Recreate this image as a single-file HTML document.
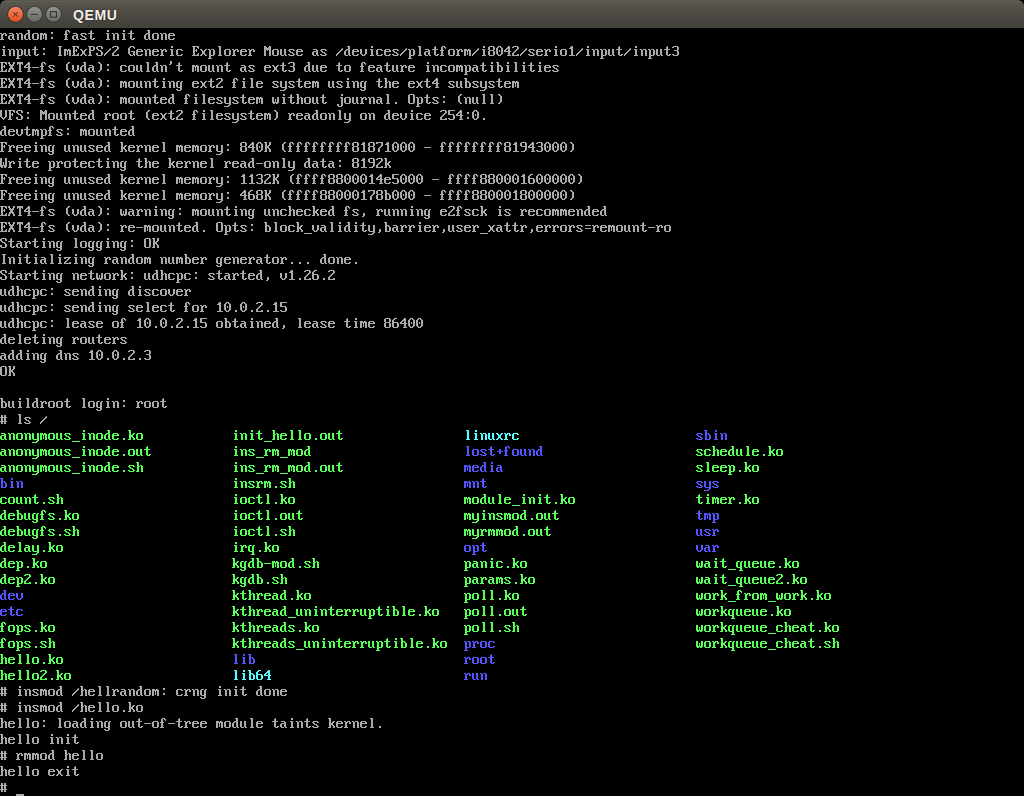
<!DOCTYPE html>
<html><head><meta charset="utf-8"><style>
html,body{margin:0;padding:0;background:#000;width:1024px;height:796px;overflow:hidden}
#win{position:absolute;left:0;top:0;width:1024px;height:796px;background:#000}
#tb{position:absolute;left:0;top:0;width:1024px;height:28px;border-radius:6px 6px 0 0;background:linear-gradient(#595750 0px,#595750 1px,#625f55 1px,#625f55 2px,#5a574f 2px,#413f3a 27px,#474540 27px,#474540 28px)}
#hl{position:absolute;left:1px;top:1px;width:1022px;height:7px;box-sizing:border-box;border-top:1px solid #625f55;border-left:1px solid rgba(98,95,85,.5);border-right:1px solid rgba(98,95,85,.5);border-radius:5px 5px 0 0}
#tbsvg{position:absolute;left:0;top:0}
#con{position:absolute;left:0;top:28px}
#txt{position:absolute;left:0;top:28px;margin:0;width:1024px;height:768px;overflow:hidden;font:13.333px/16px "Liberation Mono",monospace;color:transparent;white-space:pre}
#title{position:absolute;left:73px;top:7px;letter-spacing:0.6px;font:bold 14px "Liberation Sans",sans-serif;color:#f2eee6;text-shadow:0 0 2px rgba(0,0,0,.7)}
</style></head><body><div id="win">
<div id="tb">
<svg id="tbsvg" width="80" height="28" viewBox="0 0 80 28">
<defs>
<linearGradient id="og" x1="0" y1="0" x2="0" y2="1"><stop offset="0" stop-color="#f3876a"/><stop offset=".5" stop-color="#ed6b3e"/><stop offset="1" stop-color="#e0501a"/></linearGradient>
<linearGradient id="gg" x1="0" y1="0" x2="0" y2="1"><stop offset="0" stop-color="#93928d"/><stop offset="1" stop-color="#686763"/></linearGradient>
</defs>
<circle cx="15.5" cy="14.3" r="8.4" fill="#323533"/>
<circle cx="15.5" cy="14.3" r="7.5" fill="url(#og)"/>
<path d="M13.5 12.4L17.5 16.4M17.5 12.4L13.5 16.4" stroke="#2a2a2a" stroke-width="1" stroke-linecap="round"/>
<circle cx="34.5" cy="14.3" r="8.4" fill="#363532"/>
<circle cx="34.5" cy="14.3" r="7.5" fill="url(#gg)"/>
<rect x="31" y="13.9" width="7" height="1.2" fill="#383734"/><rect x="31" y="15.1" width="7" height="1" fill="#fff" fill-opacity=".08"/>
<circle cx="53.5" cy="14.3" r="8.4" fill="#363532"/>
<circle cx="53.5" cy="14.3" r="7.5" fill="url(#gg)"/>
<rect x="50.5" y="11.7" width="6" height="5.5" fill="none" stroke="#363532" stroke-width="1.1"/><rect x="50" y="18.3" width="7" height="1" fill="#fff" fill-opacity=".08"/>
</svg>
<div id="hl"></div><div id="title">QEMU</div></div>
<svg id="con" width="1024" height="768" viewBox="0 0 1024 768" shape-rendering="crispEdges"><defs><path id="c35" d="M1 3h2v1h-2zM4 3h2v1h-2zM1 4h2v1h-2zM4 4h2v1h-2zM0 5h7v1h-7zM1 6h2v1h-2zM4 6h2v1h-2zM1 7h2v1h-2zM4 7h2v1h-2zM1 8h2v1h-2zM4 8h2v1h-2zM0 9h7v1h-7zM1 10h2v1h-2zM4 10h2v1h-2zM1 11h2v1h-2zM4 11h2v1h-2z"/><path id="c39" d="M2 1h2v1h-2zM2 2h2v1h-2zM2 3h2v1h-2zM1 4h2v1h-2z"/><path id="c40" d="M4 2h2v1h-2zM3 3h2v1h-2zM2 4h2v1h-2zM2 5h2v1h-2zM2 6h2v1h-2zM2 7h2v1h-2zM2 8h2v1h-2zM2 9h2v1h-2zM3 10h2v1h-2zM4 11h2v1h-2z"/><path id="c41" d="M2 2h2v1h-2zM3 3h2v1h-2zM4 4h2v1h-2zM4 5h2v1h-2zM4 6h2v1h-2zM4 7h2v1h-2zM4 8h2v1h-2zM4 9h2v1h-2zM3 10h2v1h-2zM2 11h2v1h-2z"/><path id="c43" d="M3 5h2v1h-2zM3 6h2v1h-2zM1 7h6v1h-6zM3 8h2v1h-2zM3 9h2v1h-2z"/><path id="c44" d="M3 9h2v1h-2zM3 10h2v1h-2zM3 11h2v1h-2zM2 12h2v1h-2z"/><path id="c45" d="M0 7h7v1h-7z"/><path id="c46" d="M3 10h2v1h-2zM3 11h2v1h-2z"/><path id="c47" d="M6 4h1v1h-1zM5 5h2v1h-2zM4 6h2v1h-2zM3 7h2v1h-2zM2 8h2v1h-2zM1 9h2v1h-2zM0 10h2v1h-2zM0 11h1v1h-1z"/><path id="c48" d="M2 2h3v1h-3zM1 3h2v1h-2zM4 3h2v1h-2zM0 4h2v1h-2zM5 4h2v1h-2zM0 5h2v1h-2zM5 5h2v1h-2zM0 6h2v1h-2zM3 6h1v1h-1zM5 6h2v1h-2zM0 7h2v1h-2zM3 7h1v1h-1zM5 7h2v1h-2zM0 8h2v1h-2zM5 8h2v1h-2zM0 9h2v1h-2zM5 9h2v1h-2zM1 10h2v1h-2zM4 10h2v1h-2zM2 11h3v1h-3z"/><path id="c49" d="M3 2h2v1h-2zM2 3h3v1h-3zM1 4h4v1h-4zM3 5h2v1h-2zM3 6h2v1h-2zM3 7h2v1h-2zM3 8h2v1h-2zM3 9h2v1h-2zM3 10h2v1h-2zM1 11h6v1h-6z"/><path id="c50" d="M1 2h5v1h-5zM0 3h2v1h-2zM5 3h2v1h-2zM5 4h2v1h-2zM4 5h2v1h-2zM3 6h2v1h-2zM2 7h2v1h-2zM1 8h2v1h-2zM0 9h2v1h-2zM0 10h2v1h-2zM5 10h2v1h-2zM0 11h7v1h-7z"/><path id="c51" d="M1 2h5v1h-5zM0 3h2v1h-2zM5 3h2v1h-2zM5 4h2v1h-2zM5 5h2v1h-2zM2 6h4v1h-4zM5 7h2v1h-2zM5 8h2v1h-2zM5 9h2v1h-2zM0 10h2v1h-2zM5 10h2v1h-2zM1 11h5v1h-5z"/><path id="c52" d="M4 2h2v1h-2zM3 3h3v1h-3zM2 4h4v1h-4zM1 5h2v1h-2zM4 5h2v1h-2zM0 6h2v1h-2zM4 6h2v1h-2zM0 7h7v1h-7zM4 8h2v1h-2zM4 9h2v1h-2zM4 10h2v1h-2zM3 11h4v1h-4z"/><path id="c53" d="M0 2h7v1h-7zM0 3h2v1h-2zM0 4h2v1h-2zM0 5h2v1h-2zM0 6h6v1h-6zM5 7h2v1h-2zM5 8h2v1h-2zM5 9h2v1h-2zM0 10h2v1h-2zM5 10h2v1h-2zM1 11h5v1h-5z"/><path id="c54" d="M2 2h3v1h-3zM1 3h2v1h-2zM0 4h2v1h-2zM0 5h2v1h-2zM0 6h6v1h-6zM0 7h2v1h-2zM5 7h2v1h-2zM0 8h2v1h-2zM5 8h2v1h-2zM0 9h2v1h-2zM5 9h2v1h-2zM0 10h2v1h-2zM5 10h2v1h-2zM1 11h5v1h-5z"/><path id="c55" d="M0 2h7v1h-7zM0 3h2v1h-2zM5 3h2v1h-2zM5 4h2v1h-2zM5 5h2v1h-2zM4 6h2v1h-2zM3 7h2v1h-2zM2 8h2v1h-2zM2 9h2v1h-2zM2 10h2v1h-2zM2 11h2v1h-2z"/><path id="c56" d="M1 2h5v1h-5zM0 3h2v1h-2zM5 3h2v1h-2zM0 4h2v1h-2zM5 4h2v1h-2zM0 5h2v1h-2zM5 5h2v1h-2zM1 6h5v1h-5zM0 7h2v1h-2zM5 7h2v1h-2zM0 8h2v1h-2zM5 8h2v1h-2zM0 9h2v1h-2zM5 9h2v1h-2zM0 10h2v1h-2zM5 10h2v1h-2zM1 11h5v1h-5z"/><path id="c57" d="M1 2h5v1h-5zM0 3h2v1h-2zM5 3h2v1h-2zM0 4h2v1h-2zM5 4h2v1h-2zM0 5h2v1h-2zM5 5h2v1h-2zM1 6h6v1h-6zM5 7h2v1h-2zM5 8h2v1h-2zM5 9h2v1h-2zM4 10h2v1h-2zM1 11h4v1h-4z"/><path id="c58" d="M3 4h2v1h-2zM3 5h2v1h-2zM3 9h2v1h-2zM3 10h2v1h-2z"/><path id="c61" d="M1 5h6v1h-6zM1 8h6v1h-6z"/><path id="c69" d="M0 2h7v1h-7zM1 3h2v1h-2zM5 3h2v1h-2zM1 4h2v1h-2zM6 4h1v1h-1zM1 5h2v1h-2zM4 5h1v1h-1zM1 6h4v1h-4zM1 7h2v1h-2zM4 7h1v1h-1zM1 8h2v1h-2zM1 9h2v1h-2zM6 9h1v1h-1zM1 10h2v1h-2zM5 10h2v1h-2zM0 11h7v1h-7z"/><path id="c70" d="M0 2h7v1h-7zM1 3h2v1h-2zM5 3h2v1h-2zM1 4h2v1h-2zM6 4h1v1h-1zM1 5h2v1h-2zM4 5h1v1h-1zM1 6h4v1h-4zM1 7h2v1h-2zM4 7h1v1h-1zM1 8h2v1h-2zM1 9h2v1h-2zM1 10h2v1h-2zM0 11h4v1h-4z"/><path id="c71" d="M2 2h4v1h-4zM1 3h2v1h-2zM5 3h2v1h-2zM0 4h2v1h-2zM6 4h1v1h-1zM0 5h2v1h-2zM0 6h2v1h-2zM0 7h2v1h-2zM3 7h4v1h-4zM0 8h2v1h-2zM5 8h2v1h-2zM0 9h2v1h-2zM5 9h2v1h-2zM1 10h2v1h-2zM5 10h2v1h-2zM2 11h3v1h-3zM6 11h1v1h-1z"/><path id="c73" d="M2 2h4v1h-4zM3 3h2v1h-2zM3 4h2v1h-2zM3 5h2v1h-2zM3 6h2v1h-2zM3 7h2v1h-2zM3 8h2v1h-2zM3 9h2v1h-2zM3 10h2v1h-2zM2 11h4v1h-4z"/><path id="c75" d="M0 2h3v1h-3zM5 2h2v1h-2zM1 3h2v1h-2zM5 3h2v1h-2zM1 4h2v1h-2zM5 4h2v1h-2zM1 5h2v1h-2zM4 5h2v1h-2zM1 6h4v1h-4zM1 7h4v1h-4zM1 8h2v1h-2zM4 8h2v1h-2zM1 9h2v1h-2zM5 9h2v1h-2zM1 10h2v1h-2zM5 10h2v1h-2zM0 11h3v1h-3zM5 11h2v1h-2z"/><path id="c77" d="M0 2h2v1h-2zM5 2h2v1h-2zM0 3h3v1h-3zM4 3h3v1h-3zM0 4h7v1h-7zM0 5h7v1h-7zM0 6h2v1h-2zM3 6h1v1h-1zM5 6h2v1h-2zM0 7h2v1h-2zM5 7h2v1h-2zM0 8h2v1h-2zM5 8h2v1h-2zM0 9h2v1h-2zM5 9h2v1h-2zM0 10h2v1h-2zM5 10h2v1h-2zM0 11h2v1h-2zM5 11h2v1h-2z"/><path id="c79" d="M1 2h5v1h-5zM0 3h2v1h-2zM5 3h2v1h-2zM0 4h2v1h-2zM5 4h2v1h-2zM0 5h2v1h-2zM5 5h2v1h-2zM0 6h2v1h-2zM5 6h2v1h-2zM0 7h2v1h-2zM5 7h2v1h-2zM0 8h2v1h-2zM5 8h2v1h-2zM0 9h2v1h-2zM5 9h2v1h-2zM0 10h2v1h-2zM5 10h2v1h-2zM1 11h5v1h-5z"/><path id="c80" d="M0 2h6v1h-6zM1 3h2v1h-2zM5 3h2v1h-2zM1 4h2v1h-2zM5 4h2v1h-2zM1 5h2v1h-2zM5 5h2v1h-2zM1 6h5v1h-5zM1 7h2v1h-2zM1 8h2v1h-2zM1 9h2v1h-2zM1 10h2v1h-2zM0 11h4v1h-4z"/><path id="c83" d="M1 2h5v1h-5zM0 3h2v1h-2zM5 3h2v1h-2zM0 4h2v1h-2zM5 4h2v1h-2zM1 5h2v1h-2zM2 6h3v1h-3zM4 7h2v1h-2zM5 8h2v1h-2zM0 9h2v1h-2zM5 9h2v1h-2zM0 10h2v1h-2zM5 10h2v1h-2zM1 11h5v1h-5z"/><path id="c84" d="M1 2h6v1h-6zM1 3h6v1h-6zM1 4h1v1h-1zM3 4h2v1h-2zM6 4h1v1h-1zM3 5h2v1h-2zM3 6h2v1h-2zM3 7h2v1h-2zM3 8h2v1h-2zM3 9h2v1h-2zM3 10h2v1h-2zM2 11h4v1h-4z"/><path id="c86" d="M0 2h2v1h-2zM5 2h2v1h-2zM0 3h2v1h-2zM5 3h2v1h-2zM0 4h2v1h-2zM5 4h2v1h-2zM0 5h2v1h-2zM5 5h2v1h-2zM0 6h2v1h-2zM5 6h2v1h-2zM0 7h2v1h-2zM5 7h2v1h-2zM0 8h2v1h-2zM5 8h2v1h-2zM1 9h2v1h-2zM4 9h2v1h-2zM2 10h3v1h-3zM3 11h1v1h-1z"/><path id="c87" d="M0 2h2v1h-2zM5 2h2v1h-2zM0 3h2v1h-2zM5 3h2v1h-2zM0 4h2v1h-2zM5 4h2v1h-2zM0 5h2v1h-2zM5 5h2v1h-2zM0 6h2v1h-2zM3 6h1v1h-1zM5 6h2v1h-2zM0 7h2v1h-2zM3 7h1v1h-1zM5 7h2v1h-2zM0 8h2v1h-2zM3 8h1v1h-1zM5 8h2v1h-2zM0 9h7v1h-7zM0 10h3v1h-3zM4 10h3v1h-3zM1 11h2v1h-2zM4 11h2v1h-2z"/><path id="c88" d="M0 2h2v1h-2zM5 2h2v1h-2zM0 3h2v1h-2zM5 3h2v1h-2zM1 4h2v1h-2zM4 4h2v1h-2zM1 5h5v1h-5zM2 6h3v1h-3zM2 7h3v1h-3zM1 8h5v1h-5zM1 9h2v1h-2zM4 9h2v1h-2zM0 10h2v1h-2zM5 10h2v1h-2zM0 11h2v1h-2zM5 11h2v1h-2z"/><path id="c95" d="M0 13h8v1h-8z"/><path id="c97" d="M1 5h4v1h-4zM4 6h2v1h-2zM1 7h5v1h-5zM0 8h2v1h-2zM4 8h2v1h-2zM0 9h2v1h-2zM4 9h2v1h-2zM0 10h2v1h-2zM4 10h2v1h-2zM1 11h3v1h-3zM5 11h2v1h-2z"/><path id="c98" d="M0 2h3v1h-3zM1 3h2v1h-2zM1 4h2v1h-2zM1 5h4v1h-4zM1 6h2v1h-2zM4 6h2v1h-2zM1 7h2v1h-2zM5 7h2v1h-2zM1 8h2v1h-2zM5 8h2v1h-2zM1 9h2v1h-2zM5 9h2v1h-2zM1 10h2v1h-2zM5 10h2v1h-2zM1 11h5v1h-5z"/><path id="c99" d="M1 5h5v1h-5zM0 6h2v1h-2zM5 6h2v1h-2zM0 7h2v1h-2zM0 8h2v1h-2zM0 9h2v1h-2zM0 10h2v1h-2zM5 10h2v1h-2zM1 11h5v1h-5z"/><path id="c100" d="M3 2h3v1h-3zM4 3h2v1h-2zM4 4h2v1h-2zM2 5h4v1h-4zM1 6h2v1h-2zM4 6h2v1h-2zM0 7h2v1h-2zM4 7h2v1h-2zM0 8h2v1h-2zM4 8h2v1h-2zM0 9h2v1h-2zM4 9h2v1h-2zM0 10h2v1h-2zM4 10h2v1h-2zM1 11h3v1h-3zM5 11h2v1h-2z"/><path id="c101" d="M1 5h5v1h-5zM0 6h2v1h-2zM5 6h2v1h-2zM0 7h7v1h-7zM0 8h2v1h-2zM0 9h2v1h-2zM0 10h2v1h-2zM5 10h2v1h-2zM1 11h5v1h-5z"/><path id="c102" d="M2 2h3v1h-3zM1 3h2v1h-2zM4 3h2v1h-2zM1 4h2v1h-2zM5 4h1v1h-1zM1 5h2v1h-2zM0 6h4v1h-4zM1 7h2v1h-2zM1 8h2v1h-2zM1 9h2v1h-2zM1 10h2v1h-2zM0 11h4v1h-4z"/><path id="c103" d="M1 5h3v1h-3zM5 5h2v1h-2zM0 6h2v1h-2zM4 6h2v1h-2zM0 7h2v1h-2zM4 7h2v1h-2zM0 8h2v1h-2zM4 8h2v1h-2zM0 9h2v1h-2zM4 9h2v1h-2zM0 10h2v1h-2zM4 10h2v1h-2zM1 11h5v1h-5zM4 12h2v1h-2zM0 13h2v1h-2zM4 13h2v1h-2zM1 14h4v1h-4z"/><path id="c104" d="M0 2h3v1h-3zM1 3h2v1h-2zM1 4h2v1h-2zM1 5h2v1h-2zM4 5h2v1h-2zM1 6h3v1h-3zM5 6h2v1h-2zM1 7h2v1h-2zM5 7h2v1h-2zM1 8h2v1h-2zM5 8h2v1h-2zM1 9h2v1h-2zM5 9h2v1h-2zM1 10h2v1h-2zM5 10h2v1h-2zM0 11h3v1h-3zM5 11h2v1h-2z"/><path id="c105" d="M3 2h2v1h-2zM3 3h2v1h-2zM2 5h3v1h-3zM3 6h2v1h-2zM3 7h2v1h-2zM3 8h2v1h-2zM3 9h2v1h-2zM3 10h2v1h-2zM2 11h4v1h-4z"/><path id="c106" d="M5 2h2v1h-2zM5 3h2v1h-2zM4 5h3v1h-3zM5 6h2v1h-2zM5 7h2v1h-2zM5 8h2v1h-2zM5 9h2v1h-2zM5 10h2v1h-2zM5 11h2v1h-2zM1 12h2v1h-2zM5 12h2v1h-2zM1 13h2v1h-2zM5 13h2v1h-2zM2 14h4v1h-4z"/><path id="c107" d="M0 2h3v1h-3zM1 3h2v1h-2zM1 4h2v1h-2zM1 5h2v1h-2zM5 5h2v1h-2zM1 6h2v1h-2zM4 6h2v1h-2zM1 7h4v1h-4zM1 8h4v1h-4zM1 9h2v1h-2zM4 9h2v1h-2zM1 10h2v1h-2zM5 10h2v1h-2zM0 11h3v1h-3zM5 11h2v1h-2z"/><path id="c108" d="M2 2h3v1h-3zM3 3h2v1h-2zM3 4h2v1h-2zM3 5h2v1h-2zM3 6h2v1h-2zM3 7h2v1h-2zM3 8h2v1h-2zM3 9h2v1h-2zM3 10h2v1h-2zM2 11h4v1h-4z"/><path id="c109" d="M0 5h3v1h-3zM4 5h2v1h-2zM0 6h7v1h-7zM0 7h2v1h-2zM3 7h1v1h-1zM5 7h2v1h-2zM0 8h2v1h-2zM3 8h1v1h-1zM5 8h2v1h-2zM0 9h2v1h-2zM3 9h1v1h-1zM5 9h2v1h-2zM0 10h2v1h-2zM3 10h1v1h-1zM5 10h2v1h-2zM0 11h2v1h-2zM5 11h2v1h-2z"/><path id="c110" d="M0 5h2v1h-2zM3 5h3v1h-3zM1 6h2v1h-2zM5 6h2v1h-2zM1 7h2v1h-2zM5 7h2v1h-2zM1 8h2v1h-2zM5 8h2v1h-2zM1 9h2v1h-2zM5 9h2v1h-2zM1 10h2v1h-2zM5 10h2v1h-2zM1 11h2v1h-2zM5 11h2v1h-2z"/><path id="c111" d="M1 5h5v1h-5zM0 6h2v1h-2zM5 6h2v1h-2zM0 7h2v1h-2zM5 7h2v1h-2zM0 8h2v1h-2zM5 8h2v1h-2zM0 9h2v1h-2zM5 9h2v1h-2zM0 10h2v1h-2zM5 10h2v1h-2zM1 11h5v1h-5z"/><path id="c112" d="M0 5h2v1h-2zM3 5h3v1h-3zM1 6h2v1h-2zM5 6h2v1h-2zM1 7h2v1h-2zM5 7h2v1h-2zM1 8h2v1h-2zM5 8h2v1h-2zM1 9h2v1h-2zM5 9h2v1h-2zM1 10h2v1h-2zM5 10h2v1h-2zM1 11h5v1h-5zM1 12h2v1h-2zM1 13h2v1h-2zM0 14h4v1h-4z"/><path id="c113" d="M1 5h3v1h-3zM5 5h2v1h-2zM0 6h2v1h-2zM4 6h2v1h-2zM0 7h2v1h-2zM4 7h2v1h-2zM0 8h2v1h-2zM4 8h2v1h-2zM0 9h2v1h-2zM4 9h2v1h-2zM0 10h2v1h-2zM4 10h2v1h-2zM1 11h5v1h-5zM4 12h2v1h-2zM4 13h2v1h-2zM3 14h4v1h-4z"/><path id="c114" d="M0 5h2v1h-2zM3 5h3v1h-3zM1 6h3v1h-3zM5 6h2v1h-2zM1 7h2v1h-2zM5 7h2v1h-2zM1 8h2v1h-2zM1 9h2v1h-2zM1 10h2v1h-2zM0 11h4v1h-4z"/><path id="c115" d="M1 5h5v1h-5zM0 6h2v1h-2zM5 6h2v1h-2zM1 7h2v1h-2zM2 8h3v1h-3zM4 9h2v1h-2zM0 10h2v1h-2zM5 10h2v1h-2zM1 11h5v1h-5z"/><path id="c116" d="M3 2h1v1h-1zM2 3h2v1h-2zM2 4h2v1h-2zM0 5h6v1h-6zM2 6h2v1h-2zM2 7h2v1h-2zM2 8h2v1h-2zM2 9h2v1h-2zM2 10h2v1h-2zM5 10h2v1h-2zM3 11h3v1h-3z"/><path id="c117" d="M0 5h2v1h-2zM4 5h2v1h-2zM0 6h2v1h-2zM4 6h2v1h-2zM0 7h2v1h-2zM4 7h2v1h-2zM0 8h2v1h-2zM4 8h2v1h-2zM0 9h2v1h-2zM4 9h2v1h-2zM0 10h2v1h-2zM4 10h2v1h-2zM1 11h3v1h-3zM5 11h2v1h-2z"/><path id="c118" d="M0 5h2v1h-2zM5 5h2v1h-2zM0 6h2v1h-2zM5 6h2v1h-2zM0 7h2v1h-2zM5 7h2v1h-2zM0 8h2v1h-2zM5 8h2v1h-2zM0 9h2v1h-2zM5 9h2v1h-2zM1 10h2v1h-2zM4 10h2v1h-2zM2 11h3v1h-3z"/><path id="c119" d="M0 5h2v1h-2zM5 5h2v1h-2zM0 6h2v1h-2zM5 6h2v1h-2zM0 7h2v1h-2zM3 7h1v1h-1zM5 7h2v1h-2zM0 8h2v1h-2zM3 8h1v1h-1zM5 8h2v1h-2zM0 9h2v1h-2zM3 9h1v1h-1zM5 9h2v1h-2zM0 10h7v1h-7zM1 11h2v1h-2zM4 11h2v1h-2z"/><path id="c120" d="M0 5h2v1h-2zM5 5h2v1h-2zM1 6h2v1h-2zM4 6h2v1h-2zM2 7h3v1h-3zM2 8h3v1h-3zM2 9h3v1h-3zM1 10h2v1h-2zM4 10h2v1h-2zM0 11h2v1h-2zM5 11h2v1h-2z"/><path id="c121" d="M0 5h2v1h-2zM5 5h2v1h-2zM0 6h2v1h-2zM5 6h2v1h-2zM0 7h2v1h-2zM5 7h2v1h-2zM0 8h2v1h-2zM5 8h2v1h-2zM0 9h2v1h-2zM5 9h2v1h-2zM0 10h2v1h-2zM5 10h2v1h-2zM1 11h6v1h-6zM5 12h2v1h-2zM4 13h2v1h-2zM0 14h5v1h-5z"/><path id="c122" d="M0 5h7v1h-7zM0 6h2v1h-2zM4 6h2v1h-2zM3 7h2v1h-2zM2 8h2v1h-2zM1 9h2v1h-2zM0 10h2v1h-2zM5 10h2v1h-2zM0 11h7v1h-7z"/></defs><g fill="#aaaaaa"><use href="#c114" x="0" y="0"/><use href="#c97" x="8" y="0"/><use href="#c110" x="16" y="0"/><use href="#c100" x="24" y="0"/><use href="#c111" x="32" y="0"/><use href="#c109" x="40" y="0"/><use href="#c58" x="48" y="0"/><use href="#c102" x="64" y="0"/><use href="#c97" x="72" y="0"/><use href="#c115" x="80" y="0"/><use href="#c116" x="88" y="0"/><use href="#c105" x="104" y="0"/><use href="#c110" x="112" y="0"/><use href="#c105" x="120" y="0"/><use href="#c116" x="128" y="0"/><use href="#c100" x="144" y="0"/><use href="#c111" x="152" y="0"/><use href="#c110" x="160" y="0"/><use href="#c101" x="168" y="0"/><use href="#c105" x="0" y="16"/><use href="#c110" x="8" y="16"/><use href="#c112" x="16" y="16"/><use href="#c117" x="24" y="16"/><use href="#c116" x="32" y="16"/><use href="#c58" x="40" y="16"/><use href="#c73" x="56" y="16"/><use href="#c109" x="64" y="16"/><use href="#c69" x="72" y="16"/><use href="#c120" x="80" y="16"/><use href="#c80" x="88" y="16"/><use href="#c83" x="96" y="16"/><use href="#c47" x="104" y="16"/><use href="#c50" x="112" y="16"/><use href="#c71" x="128" y="16"/><use href="#c101" x="136" y="16"/><use href="#c110" x="144" y="16"/><use href="#c101" x="152" y="16"/><use href="#c114" x="160" y="16"/><use href="#c105" x="168" y="16"/><use href="#c99" x="176" y="16"/><use href="#c69" x="192" y="16"/><use href="#c120" x="200" y="16"/><use href="#c112" x="208" y="16"/><use href="#c108" x="216" y="16"/><use href="#c111" x="224" y="16"/><use href="#c114" x="232" y="16"/><use href="#c101" x="240" y="16"/><use href="#c114" x="248" y="16"/><use href="#c77" x="264" y="16"/><use href="#c111" x="272" y="16"/><use href="#c117" x="280" y="16"/><use href="#c115" x="288" y="16"/><use href="#c101" x="296" y="16"/><use href="#c97" x="312" y="16"/><use href="#c115" x="320" y="16"/><use href="#c47" x="336" y="16"/><use href="#c100" x="344" y="16"/><use href="#c101" x="352" y="16"/><use href="#c118" x="360" y="16"/><use href="#c105" x="368" y="16"/><use href="#c99" x="376" y="16"/><use href="#c101" x="384" y="16"/><use href="#c115" x="392" y="16"/><use href="#c47" x="400" y="16"/><use href="#c112" x="408" y="16"/><use href="#c108" x="416" y="16"/><use href="#c97" x="424" y="16"/><use href="#c116" x="432" y="16"/><use href="#c102" x="440" y="16"/><use href="#c111" x="448" y="16"/><use href="#c114" x="456" y="16"/><use href="#c109" x="464" y="16"/><use href="#c47" x="472" y="16"/><use href="#c105" x="480" y="16"/><use href="#c56" x="488" y="16"/><use href="#c48" x="496" y="16"/><use href="#c52" x="504" y="16"/><use href="#c50" x="512" y="16"/><use href="#c47" x="520" y="16"/><use href="#c115" x="528" y="16"/><use href="#c101" x="536" y="16"/><use href="#c114" x="544" y="16"/><use href="#c105" x="552" y="16"/><use href="#c111" x="560" y="16"/><use href="#c49" x="568" y="16"/><use href="#c47" x="576" y="16"/><use href="#c105" x="584" y="16"/><use href="#c110" x="592" y="16"/><use href="#c112" x="600" y="16"/><use href="#c117" x="608" y="16"/><use href="#c116" x="616" y="16"/><use href="#c47" x="624" y="16"/><use href="#c105" x="632" y="16"/><use href="#c110" x="640" y="16"/><use href="#c112" x="648" y="16"/><use href="#c117" x="656" y="16"/><use href="#c116" x="664" y="16"/><use href="#c51" x="672" y="16"/><use href="#c69" x="0" y="32"/><use href="#c88" x="8" y="32"/><use href="#c84" x="16" y="32"/><use href="#c52" x="24" y="32"/><use href="#c45" x="32" y="32"/><use href="#c102" x="40" y="32"/><use href="#c115" x="48" y="32"/><use href="#c40" x="64" y="32"/><use href="#c118" x="72" y="32"/><use href="#c100" x="80" y="32"/><use href="#c97" x="88" y="32"/><use href="#c41" x="96" y="32"/><use href="#c58" x="104" y="32"/><use href="#c99" x="120" y="32"/><use href="#c111" x="128" y="32"/><use href="#c117" x="136" y="32"/><use href="#c108" x="144" y="32"/><use href="#c100" x="152" y="32"/><use href="#c110" x="160" y="32"/><use href="#c39" x="168" y="32"/><use href="#c116" x="176" y="32"/><use href="#c109" x="192" y="32"/><use href="#c111" x="200" y="32"/><use href="#c117" x="208" y="32"/><use href="#c110" x="216" y="32"/><use href="#c116" x="224" y="32"/><use href="#c97" x="240" y="32"/><use href="#c115" x="248" y="32"/><use href="#c101" x="264" y="32"/><use href="#c120" x="272" y="32"/><use href="#c116" x="280" y="32"/><use href="#c51" x="288" y="32"/><use href="#c100" x="304" y="32"/><use href="#c117" x="312" y="32"/><use href="#c101" x="320" y="32"/><use href="#c116" x="336" y="32"/><use href="#c111" x="344" y="32"/><use href="#c102" x="360" y="32"/><use href="#c101" x="368" y="32"/><use href="#c97" x="376" y="32"/><use href="#c116" x="384" y="32"/><use href="#c117" x="392" y="32"/><use href="#c114" x="400" y="32"/><use href="#c101" x="408" y="32"/><use href="#c105" x="424" y="32"/><use href="#c110" x="432" y="32"/><use href="#c99" x="440" y="32"/><use href="#c111" x="448" y="32"/><use href="#c109" x="456" y="32"/><use href="#c112" x="464" y="32"/><use href="#c97" x="472" y="32"/><use href="#c116" x="480" y="32"/><use href="#c105" x="488" y="32"/><use href="#c98" x="496" y="32"/><use href="#c105" x="504" y="32"/><use href="#c108" x="512" y="32"/><use href="#c105" x="520" y="32"/><use href="#c116" x="528" y="32"/><use href="#c105" x="536" y="32"/><use href="#c101" x="544" y="32"/><use href="#c115" x="552" y="32"/><use href="#c69" x="0" y="48"/><use href="#c88" x="8" y="48"/><use href="#c84" x="16" y="48"/><use href="#c52" x="24" y="48"/><use href="#c45" x="32" y="48"/><use href="#c102" x="40" y="48"/><use href="#c115" x="48" y="48"/><use href="#c40" x="64" y="48"/><use href="#c118" x="72" y="48"/><use href="#c100" x="80" y="48"/><use href="#c97" x="88" y="48"/><use href="#c41" x="96" y="48"/><use href="#c58" x="104" y="48"/><use href="#c109" x="120" y="48"/><use href="#c111" x="128" y="48"/><use href="#c117" x="136" y="48"/><use href="#c110" x="144" y="48"/><use href="#c116" x="152" y="48"/><use href="#c105" x="160" y="48"/><use href="#c110" x="168" y="48"/><use href="#c103" x="176" y="48"/><use href="#c101" x="192" y="48"/><use href="#c120" x="200" y="48"/><use href="#c116" x="208" y="48"/><use href="#c50" x="216" y="48"/><use href="#c102" x="232" y="48"/><use href="#c105" x="240" y="48"/><use href="#c108" x="248" y="48"/><use href="#c101" x="256" y="48"/><use href="#c115" x="272" y="48"/><use href="#c121" x="280" y="48"/><use href="#c115" x="288" y="48"/><use href="#c116" x="296" y="48"/><use href="#c101" x="304" y="48"/><use href="#c109" x="312" y="48"/><use href="#c117" x="328" y="48"/><use href="#c115" x="336" y="48"/><use href="#c105" x="344" y="48"/><use href="#c110" x="352" y="48"/><use href="#c103" x="360" y="48"/><use href="#c116" x="376" y="48"/><use href="#c104" x="384" y="48"/><use href="#c101" x="392" y="48"/><use href="#c101" x="408" y="48"/><use href="#c120" x="416" y="48"/><use href="#c116" x="424" y="48"/><use href="#c52" x="432" y="48"/><use href="#c115" x="448" y="48"/><use href="#c117" x="456" y="48"/><use href="#c98" x="464" y="48"/><use href="#c115" x="472" y="48"/><use href="#c121" x="480" y="48"/><use href="#c115" x="488" y="48"/><use href="#c116" x="496" y="48"/><use href="#c101" x="504" y="48"/><use href="#c109" x="512" y="48"/><use href="#c69" x="0" y="64"/><use href="#c88" x="8" y="64"/><use href="#c84" x="16" y="64"/><use href="#c52" x="24" y="64"/><use href="#c45" x="32" y="64"/><use href="#c102" x="40" y="64"/><use href="#c115" x="48" y="64"/><use href="#c40" x="64" y="64"/><use href="#c118" x="72" y="64"/><use href="#c100" x="80" y="64"/><use href="#c97" x="88" y="64"/><use href="#c41" x="96" y="64"/><use href="#c58" x="104" y="64"/><use href="#c109" x="120" y="64"/><use href="#c111" x="128" y="64"/><use href="#c117" x="136" y="64"/><use href="#c110" x="144" y="64"/><use href="#c116" x="152" y="64"/><use href="#c101" x="160" y="64"/><use href="#c100" x="168" y="64"/><use href="#c102" x="184" y="64"/><use href="#c105" x="192" y="64"/><use href="#c108" x="200" y="64"/><use href="#c101" x="208" y="64"/><use href="#c115" x="216" y="64"/><use href="#c121" x="224" y="64"/><use href="#c115" x="232" y="64"/><use href="#c116" x="240" y="64"/><use href="#c101" x="248" y="64"/><use href="#c109" x="256" y="64"/><use href="#c119" x="272" y="64"/><use href="#c105" x="280" y="64"/><use href="#c116" x="288" y="64"/><use href="#c104" x="296" y="64"/><use href="#c111" x="304" y="64"/><use href="#c117" x="312" y="64"/><use href="#c116" x="320" y="64"/><use href="#c106" x="336" y="64"/><use href="#c111" x="344" y="64"/><use href="#c117" x="352" y="64"/><use href="#c114" x="360" y="64"/><use href="#c110" x="368" y="64"/><use href="#c97" x="376" y="64"/><use href="#c108" x="384" y="64"/><use href="#c46" x="392" y="64"/><use href="#c79" x="408" y="64"/><use href="#c112" x="416" y="64"/><use href="#c116" x="424" y="64"/><use href="#c115" x="432" y="64"/><use href="#c58" x="440" y="64"/><use href="#c40" x="456" y="64"/><use href="#c110" x="464" y="64"/><use href="#c117" x="472" y="64"/><use href="#c108" x="480" y="64"/><use href="#c108" x="488" y="64"/><use href="#c41" x="496" y="64"/><use href="#c86" x="0" y="80"/><use href="#c70" x="8" y="80"/><use href="#c83" x="16" y="80"/><use href="#c58" x="24" y="80"/><use href="#c77" x="40" y="80"/><use href="#c111" x="48" y="80"/><use href="#c117" x="56" y="80"/><use href="#c110" x="64" y="80"/><use href="#c116" x="72" y="80"/><use href="#c101" x="80" y="80"/><use href="#c100" x="88" y="80"/><use href="#c114" x="104" y="80"/><use href="#c111" x="112" y="80"/><use href="#c111" x="120" y="80"/><use href="#c116" x="128" y="80"/><use href="#c40" x="144" y="80"/><use href="#c101" x="152" y="80"/><use href="#c120" x="160" y="80"/><use href="#c116" x="168" y="80"/><use href="#c50" x="176" y="80"/><use href="#c102" x="192" y="80"/><use href="#c105" x="200" y="80"/><use href="#c108" x="208" y="80"/><use href="#c101" x="216" y="80"/><use href="#c115" x="224" y="80"/><use href="#c121" x="232" y="80"/><use href="#c115" x="240" y="80"/><use href="#c116" x="248" y="80"/><use href="#c101" x="256" y="80"/><use href="#c109" x="264" y="80"/><use href="#c41" x="272" y="80"/><use href="#c114" x="288" y="80"/><use href="#c101" x="296" y="80"/><use href="#c97" x="304" y="80"/><use href="#c100" x="312" y="80"/><use href="#c111" x="320" y="80"/><use href="#c110" x="328" y="80"/><use href="#c108" x="336" y="80"/><use href="#c121" x="344" y="80"/><use href="#c111" x="360" y="80"/><use href="#c110" x="368" y="80"/><use href="#c100" x="384" y="80"/><use href="#c101" x="392" y="80"/><use href="#c118" x="400" y="80"/><use href="#c105" x="408" y="80"/><use href="#c99" x="416" y="80"/><use href="#c101" x="424" y="80"/><use href="#c50" x="440" y="80"/><use href="#c53" x="448" y="80"/><use href="#c52" x="456" y="80"/><use href="#c58" x="464" y="80"/><use href="#c48" x="472" y="80"/><use href="#c46" x="480" y="80"/><use href="#c100" x="0" y="96"/><use href="#c101" x="8" y="96"/><use href="#c118" x="16" y="96"/><use href="#c116" x="24" y="96"/><use href="#c109" x="32" y="96"/><use href="#c112" x="40" y="96"/><use href="#c102" x="48" y="96"/><use href="#c115" x="56" y="96"/><use href="#c58" x="64" y="96"/><use href="#c109" x="80" y="96"/><use href="#c111" x="88" y="96"/><use href="#c117" x="96" y="96"/><use href="#c110" x="104" y="96"/><use href="#c116" x="112" y="96"/><use href="#c101" x="120" y="96"/><use href="#c100" x="128" y="96"/><use href="#c70" x="0" y="112"/><use href="#c114" x="8" y="112"/><use href="#c101" x="16" y="112"/><use href="#c101" x="24" y="112"/><use href="#c105" x="32" y="112"/><use href="#c110" x="40" y="112"/><use href="#c103" x="48" y="112"/><use href="#c117" x="64" y="112"/><use href="#c110" x="72" y="112"/><use href="#c117" x="80" y="112"/><use href="#c115" x="88" y="112"/><use href="#c101" x="96" y="112"/><use href="#c100" x="104" y="112"/><use href="#c107" x="120" y="112"/><use href="#c101" x="128" y="112"/><use href="#c114" x="136" y="112"/><use href="#c110" x="144" y="112"/><use href="#c101" x="152" y="112"/><use href="#c108" x="160" y="112"/><use href="#c109" x="176" y="112"/><use href="#c101" x="184" y="112"/><use href="#c109" x="192" y="112"/><use href="#c111" x="200" y="112"/><use href="#c114" x="208" y="112"/><use href="#c121" x="216" y="112"/><use href="#c58" x="224" y="112"/><use href="#c56" x="240" y="112"/><use href="#c52" x="248" y="112"/><use href="#c48" x="256" y="112"/><use href="#c75" x="264" y="112"/><use href="#c40" x="280" y="112"/><use href="#c102" x="288" y="112"/><use href="#c102" x="296" y="112"/><use href="#c102" x="304" y="112"/><use href="#c102" x="312" y="112"/><use href="#c102" x="320" y="112"/><use href="#c102" x="328" y="112"/><use href="#c102" x="336" y="112"/><use href="#c102" x="344" y="112"/><use href="#c56" x="352" y="112"/><use href="#c49" x="360" y="112"/><use href="#c56" x="368" y="112"/><use href="#c55" x="376" y="112"/><use href="#c49" x="384" y="112"/><use href="#c48" x="392" y="112"/><use href="#c48" x="400" y="112"/><use href="#c48" x="408" y="112"/><use href="#c45" x="424" y="112"/><use href="#c102" x="440" y="112"/><use href="#c102" x="448" y="112"/><use href="#c102" x="456" y="112"/><use href="#c102" x="464" y="112"/><use href="#c102" x="472" y="112"/><use href="#c102" x="480" y="112"/><use href="#c102" x="488" y="112"/><use href="#c102" x="496" y="112"/><use href="#c56" x="504" y="112"/><use href="#c49" x="512" y="112"/><use href="#c57" x="520" y="112"/><use href="#c52" x="528" y="112"/><use href="#c51" x="536" y="112"/><use href="#c48" x="544" y="112"/><use href="#c48" x="552" y="112"/><use href="#c48" x="560" y="112"/><use href="#c41" x="568" y="112"/><use href="#c87" x="0" y="128"/><use href="#c114" x="8" y="128"/><use href="#c105" x="16" y="128"/><use href="#c116" x="24" y="128"/><use href="#c101" x="32" y="128"/><use href="#c112" x="48" y="128"/><use href="#c114" x="56" y="128"/><use href="#c111" x="64" y="128"/><use href="#c116" x="72" y="128"/><use href="#c101" x="80" y="128"/><use href="#c99" x="88" y="128"/><use href="#c116" x="96" y="128"/><use href="#c105" x="104" y="128"/><use href="#c110" x="112" y="128"/><use href="#c103" x="120" y="128"/><use href="#c116" x="136" y="128"/><use href="#c104" x="144" y="128"/><use href="#c101" x="152" y="128"/><use href="#c107" x="168" y="128"/><use href="#c101" x="176" y="128"/><use href="#c114" x="184" y="128"/><use href="#c110" x="192" y="128"/><use href="#c101" x="200" y="128"/><use href="#c108" x="208" y="128"/><use href="#c114" x="224" y="128"/><use href="#c101" x="232" y="128"/><use href="#c97" x="240" y="128"/><use href="#c100" x="248" y="128"/><use href="#c45" x="256" y="128"/><use href="#c111" x="264" y="128"/><use href="#c110" x="272" y="128"/><use href="#c108" x="280" y="128"/><use href="#c121" x="288" y="128"/><use href="#c100" x="304" y="128"/><use href="#c97" x="312" y="128"/><use href="#c116" x="320" y="128"/><use href="#c97" x="328" y="128"/><use href="#c58" x="336" y="128"/><use href="#c56" x="352" y="128"/><use href="#c49" x="360" y="128"/><use href="#c57" x="368" y="128"/><use href="#c50" x="376" y="128"/><use href="#c107" x="384" y="128"/><use href="#c70" x="0" y="144"/><use href="#c114" x="8" y="144"/><use href="#c101" x="16" y="144"/><use href="#c101" x="24" y="144"/><use href="#c105" x="32" y="144"/><use href="#c110" x="40" y="144"/><use href="#c103" x="48" y="144"/><use href="#c117" x="64" y="144"/><use href="#c110" x="72" y="144"/><use href="#c117" x="80" y="144"/><use href="#c115" x="88" y="144"/><use href="#c101" x="96" y="144"/><use href="#c100" x="104" y="144"/><use href="#c107" x="120" y="144"/><use href="#c101" x="128" y="144"/><use href="#c114" x="136" y="144"/><use href="#c110" x="144" y="144"/><use href="#c101" x="152" y="144"/><use href="#c108" x="160" y="144"/><use href="#c109" x="176" y="144"/><use href="#c101" x="184" y="144"/><use href="#c109" x="192" y="144"/><use href="#c111" x="200" y="144"/><use href="#c114" x="208" y="144"/><use href="#c121" x="216" y="144"/><use href="#c58" x="224" y="144"/><use href="#c49" x="240" y="144"/><use href="#c49" x="248" y="144"/><use href="#c51" x="256" y="144"/><use href="#c50" x="264" y="144"/><use href="#c75" x="272" y="144"/><use href="#c40" x="288" y="144"/><use href="#c102" x="296" y="144"/><use href="#c102" x="304" y="144"/><use href="#c102" x="312" y="144"/><use href="#c102" x="320" y="144"/><use href="#c56" x="328" y="144"/><use href="#c56" x="336" y="144"/><use href="#c48" x="344" y="144"/><use href="#c48" x="352" y="144"/><use href="#c48" x="360" y="144"/><use href="#c49" x="368" y="144"/><use href="#c52" x="376" y="144"/><use href="#c101" x="384" y="144"/><use href="#c53" x="392" y="144"/><use href="#c48" x="400" y="144"/><use href="#c48" x="408" y="144"/><use href="#c48" x="416" y="144"/><use href="#c45" x="432" y="144"/><use href="#c102" x="448" y="144"/><use href="#c102" x="456" y="144"/><use href="#c102" x="464" y="144"/><use href="#c102" x="472" y="144"/><use href="#c56" x="480" y="144"/><use href="#c56" x="488" y="144"/><use href="#c48" x="496" y="144"/><use href="#c48" x="504" y="144"/><use href="#c48" x="512" y="144"/><use href="#c49" x="520" y="144"/><use href="#c54" x="528" y="144"/><use href="#c48" x="536" y="144"/><use href="#c48" x="544" y="144"/><use href="#c48" x="552" y="144"/><use href="#c48" x="560" y="144"/><use href="#c48" x="568" y="144"/><use href="#c41" x="576" y="144"/><use href="#c70" x="0" y="160"/><use href="#c114" x="8" y="160"/><use href="#c101" x="16" y="160"/><use href="#c101" x="24" y="160"/><use href="#c105" x="32" y="160"/><use href="#c110" x="40" y="160"/><use href="#c103" x="48" y="160"/><use href="#c117" x="64" y="160"/><use href="#c110" x="72" y="160"/><use href="#c117" x="80" y="160"/><use href="#c115" x="88" y="160"/><use href="#c101" x="96" y="160"/><use href="#c100" x="104" y="160"/><use href="#c107" x="120" y="160"/><use href="#c101" x="128" y="160"/><use href="#c114" x="136" y="160"/><use href="#c110" x="144" y="160"/><use href="#c101" x="152" y="160"/><use href="#c108" x="160" y="160"/><use href="#c109" x="176" y="160"/><use href="#c101" x="184" y="160"/><use href="#c109" x="192" y="160"/><use href="#c111" x="200" y="160"/><use href="#c114" x="208" y="160"/><use href="#c121" x="216" y="160"/><use href="#c58" x="224" y="160"/><use href="#c52" x="240" y="160"/><use href="#c54" x="248" y="160"/><use href="#c56" x="256" y="160"/><use href="#c75" x="264" y="160"/><use href="#c40" x="280" y="160"/><use href="#c102" x="288" y="160"/><use href="#c102" x="296" y="160"/><use href="#c102" x="304" y="160"/><use href="#c102" x="312" y="160"/><use href="#c56" x="320" y="160"/><use href="#c56" x="328" y="160"/><use href="#c48" x="336" y="160"/><use href="#c48" x="344" y="160"/><use href="#c48" x="352" y="160"/><use href="#c49" x="360" y="160"/><use href="#c55" x="368" y="160"/><use href="#c56" x="376" y="160"/><use href="#c98" x="384" y="160"/><use href="#c48" x="392" y="160"/><use href="#c48" x="400" y="160"/><use href="#c48" x="408" y="160"/><use href="#c45" x="424" y="160"/><use href="#c102" x="440" y="160"/><use href="#c102" x="448" y="160"/><use href="#c102" x="456" y="160"/><use href="#c102" x="464" y="160"/><use href="#c56" x="472" y="160"/><use href="#c56" x="480" y="160"/><use href="#c48" x="488" y="160"/><use href="#c48" x="496" y="160"/><use href="#c48" x="504" y="160"/><use href="#c49" x="512" y="160"/><use href="#c56" x="520" y="160"/><use href="#c48" x="528" y="160"/><use href="#c48" x="536" y="160"/><use href="#c48" x="544" y="160"/><use href="#c48" x="552" y="160"/><use href="#c48" x="560" y="160"/><use href="#c41" x="568" y="160"/><use href="#c69" x="0" y="176"/><use href="#c88" x="8" y="176"/><use href="#c84" x="16" y="176"/><use href="#c52" x="24" y="176"/><use href="#c45" x="32" y="176"/><use href="#c102" x="40" y="176"/><use href="#c115" x="48" y="176"/><use href="#c40" x="64" y="176"/><use href="#c118" x="72" y="176"/><use href="#c100" x="80" y="176"/><use href="#c97" x="88" y="176"/><use href="#c41" x="96" y="176"/><use href="#c58" x="104" y="176"/><use href="#c119" x="120" y="176"/><use href="#c97" x="128" y="176"/><use href="#c114" x="136" y="176"/><use href="#c110" x="144" y="176"/><use href="#c105" x="152" y="176"/><use href="#c110" x="160" y="176"/><use href="#c103" x="168" y="176"/><use href="#c58" x="176" y="176"/><use href="#c109" x="192" y="176"/><use href="#c111" x="200" y="176"/><use href="#c117" x="208" y="176"/><use href="#c110" x="216" y="176"/><use href="#c116" x="224" y="176"/><use href="#c105" x="232" y="176"/><use href="#c110" x="240" y="176"/><use href="#c103" x="248" y="176"/><use href="#c117" x="264" y="176"/><use href="#c110" x="272" y="176"/><use href="#c99" x="280" y="176"/><use href="#c104" x="288" y="176"/><use href="#c101" x="296" y="176"/><use href="#c99" x="304" y="176"/><use href="#c107" x="312" y="176"/><use href="#c101" x="320" y="176"/><use href="#c100" x="328" y="176"/><use href="#c102" x="344" y="176"/><use href="#c115" x="352" y="176"/><use href="#c44" x="360" y="176"/><use href="#c114" x="376" y="176"/><use href="#c117" x="384" y="176"/><use href="#c110" x="392" y="176"/><use href="#c110" x="400" y="176"/><use href="#c105" x="408" y="176"/><use href="#c110" x="416" y="176"/><use href="#c103" x="424" y="176"/><use href="#c101" x="440" y="176"/><use href="#c50" x="448" y="176"/><use href="#c102" x="456" y="176"/><use href="#c115" x="464" y="176"/><use href="#c99" x="472" y="176"/><use href="#c107" x="480" y="176"/><use href="#c105" x="496" y="176"/><use href="#c115" x="504" y="176"/><use href="#c114" x="520" y="176"/><use href="#c101" x="528" y="176"/><use href="#c99" x="536" y="176"/><use href="#c111" x="544" y="176"/><use href="#c109" x="552" y="176"/><use href="#c109" x="560" y="176"/><use href="#c101" x="568" y="176"/><use href="#c110" x="576" y="176"/><use href="#c100" x="584" y="176"/><use href="#c101" x="592" y="176"/><use href="#c100" x="600" y="176"/><use href="#c69" x="0" y="192"/><use href="#c88" x="8" y="192"/><use href="#c84" x="16" y="192"/><use href="#c52" x="24" y="192"/><use href="#c45" x="32" y="192"/><use href="#c102" x="40" y="192"/><use href="#c115" x="48" y="192"/><use href="#c40" x="64" y="192"/><use href="#c118" x="72" y="192"/><use href="#c100" x="80" y="192"/><use href="#c97" x="88" y="192"/><use href="#c41" x="96" y="192"/><use href="#c58" x="104" y="192"/><use href="#c114" x="120" y="192"/><use href="#c101" x="128" y="192"/><use href="#c45" x="136" y="192"/><use href="#c109" x="144" y="192"/><use href="#c111" x="152" y="192"/><use href="#c117" x="160" y="192"/><use href="#c110" x="168" y="192"/><use href="#c116" x="176" y="192"/><use href="#c101" x="184" y="192"/><use href="#c100" x="192" y="192"/><use href="#c46" x="200" y="192"/><use href="#c79" x="216" y="192"/><use href="#c112" x="224" y="192"/><use href="#c116" x="232" y="192"/><use href="#c115" x="240" y="192"/><use href="#c58" x="248" y="192"/><use href="#c98" x="264" y="192"/><use href="#c108" x="272" y="192"/><use href="#c111" x="280" y="192"/><use href="#c99" x="288" y="192"/><use href="#c107" x="296" y="192"/><use href="#c95" x="304" y="192"/><use href="#c118" x="312" y="192"/><use href="#c97" x="320" y="192"/><use href="#c108" x="328" y="192"/><use href="#c105" x="336" y="192"/><use href="#c100" x="344" y="192"/><use href="#c105" x="352" y="192"/><use href="#c116" x="360" y="192"/><use href="#c121" x="368" y="192"/><use href="#c44" x="376" y="192"/><use href="#c98" x="384" y="192"/><use href="#c97" x="392" y="192"/><use href="#c114" x="400" y="192"/><use href="#c114" x="408" y="192"/><use href="#c105" x="416" y="192"/><use href="#c101" x="424" y="192"/><use href="#c114" x="432" y="192"/><use href="#c44" x="440" y="192"/><use href="#c117" x="448" y="192"/><use href="#c115" x="456" y="192"/><use href="#c101" x="464" y="192"/><use href="#c114" x="472" y="192"/><use href="#c95" x="480" y="192"/><use href="#c120" x="488" y="192"/><use href="#c97" x="496" y="192"/><use href="#c116" x="504" y="192"/><use href="#c116" x="512" y="192"/><use href="#c114" x="520" y="192"/><use href="#c44" x="528" y="192"/><use href="#c101" x="536" y="192"/><use href="#c114" x="544" y="192"/><use href="#c114" x="552" y="192"/><use href="#c111" x="560" y="192"/><use href="#c114" x="568" y="192"/><use href="#c115" x="576" y="192"/><use href="#c61" x="584" y="192"/><use href="#c114" x="592" y="192"/><use href="#c101" x="600" y="192"/><use href="#c109" x="608" y="192"/><use href="#c111" x="616" y="192"/><use href="#c117" x="624" y="192"/><use href="#c110" x="632" y="192"/><use href="#c116" x="640" y="192"/><use href="#c45" x="648" y="192"/><use href="#c114" x="656" y="192"/><use href="#c111" x="664" y="192"/><use href="#c83" x="0" y="208"/><use href="#c116" x="8" y="208"/><use href="#c97" x="16" y="208"/><use href="#c114" x="24" y="208"/><use href="#c116" x="32" y="208"/><use href="#c105" x="40" y="208"/><use href="#c110" x="48" y="208"/><use href="#c103" x="56" y="208"/><use href="#c108" x="72" y="208"/><use href="#c111" x="80" y="208"/><use href="#c103" x="88" y="208"/><use href="#c103" x="96" y="208"/><use href="#c105" x="104" y="208"/><use href="#c110" x="112" y="208"/><use href="#c103" x="120" y="208"/><use href="#c58" x="128" y="208"/><use href="#c79" x="144" y="208"/><use href="#c75" x="152" y="208"/><use href="#c73" x="0" y="224"/><use href="#c110" x="8" y="224"/><use href="#c105" x="16" y="224"/><use href="#c116" x="24" y="224"/><use href="#c105" x="32" y="224"/><use href="#c97" x="40" y="224"/><use href="#c108" x="48" y="224"/><use href="#c105" x="56" y="224"/><use href="#c122" x="64" y="224"/><use href="#c105" x="72" y="224"/><use href="#c110" x="80" y="224"/><use href="#c103" x="88" y="224"/><use href="#c114" x="104" y="224"/><use href="#c97" x="112" y="224"/><use href="#c110" x="120" y="224"/><use href="#c100" x="128" y="224"/><use href="#c111" x="136" y="224"/><use href="#c109" x="144" y="224"/><use href="#c110" x="160" y="224"/><use href="#c117" x="168" y="224"/><use href="#c109" x="176" y="224"/><use href="#c98" x="184" y="224"/><use href="#c101" x="192" y="224"/><use href="#c114" x="200" y="224"/><use href="#c103" x="216" y="224"/><use href="#c101" x="224" y="224"/><use href="#c110" x="232" y="224"/><use href="#c101" x="240" y="224"/><use href="#c114" x="248" y="224"/><use href="#c97" x="256" y="224"/><use href="#c116" x="264" y="224"/><use href="#c111" x="272" y="224"/><use href="#c114" x="280" y="224"/><use href="#c46" x="288" y="224"/><use href="#c46" x="296" y="224"/><use href="#c46" x="304" y="224"/><use href="#c100" x="320" y="224"/><use href="#c111" x="328" y="224"/><use href="#c110" x="336" y="224"/><use href="#c101" x="344" y="224"/><use href="#c46" x="352" y="224"/><use href="#c83" x="0" y="240"/><use href="#c116" x="8" y="240"/><use href="#c97" x="16" y="240"/><use href="#c114" x="24" y="240"/><use href="#c116" x="32" y="240"/><use href="#c105" x="40" y="240"/><use href="#c110" x="48" y="240"/><use href="#c103" x="56" y="240"/><use href="#c110" x="72" y="240"/><use href="#c101" x="80" y="240"/><use href="#c116" x="88" y="240"/><use href="#c119" x="96" y="240"/><use href="#c111" x="104" y="240"/><use href="#c114" x="112" y="240"/><use href="#c107" x="120" y="240"/><use href="#c58" x="128" y="240"/><use href="#c117" x="144" y="240"/><use href="#c100" x="152" y="240"/><use href="#c104" x="160" y="240"/><use href="#c99" x="168" y="240"/><use href="#c112" x="176" y="240"/><use href="#c99" x="184" y="240"/><use href="#c58" x="192" y="240"/><use href="#c115" x="208" y="240"/><use href="#c116" x="216" y="240"/><use href="#c97" x="224" y="240"/><use href="#c114" x="232" y="240"/><use href="#c116" x="240" y="240"/><use href="#c101" x="248" y="240"/><use href="#c100" x="256" y="240"/><use href="#c44" x="264" y="240"/><use href="#c118" x="280" y="240"/><use href="#c49" x="288" y="240"/><use href="#c46" x="296" y="240"/><use href="#c50" x="304" y="240"/><use href="#c54" x="312" y="240"/><use href="#c46" x="320" y="240"/><use href="#c50" x="328" y="240"/><use href="#c117" x="0" y="256"/><use href="#c100" x="8" y="256"/><use href="#c104" x="16" y="256"/><use href="#c99" x="24" y="256"/><use href="#c112" x="32" y="256"/><use href="#c99" x="40" y="256"/><use href="#c58" x="48" y="256"/><use href="#c115" x="64" y="256"/><use href="#c101" x="72" y="256"/><use href="#c110" x="80" y="256"/><use href="#c100" x="88" y="256"/><use href="#c105" x="96" y="256"/><use href="#c110" x="104" y="256"/><use href="#c103" x="112" y="256"/><use href="#c100" x="128" y="256"/><use href="#c105" x="136" y="256"/><use href="#c115" x="144" y="256"/><use href="#c99" x="152" y="256"/><use href="#c111" x="160" y="256"/><use href="#c118" x="168" y="256"/><use href="#c101" x="176" y="256"/><use href="#c114" x="184" y="256"/><use href="#c117" x="0" y="272"/><use href="#c100" x="8" y="272"/><use href="#c104" x="16" y="272"/><use href="#c99" x="24" y="272"/><use href="#c112" x="32" y="272"/><use href="#c99" x="40" y="272"/><use href="#c58" x="48" y="272"/><use href="#c115" x="64" y="272"/><use href="#c101" x="72" y="272"/><use href="#c110" x="80" y="272"/><use href="#c100" x="88" y="272"/><use href="#c105" x="96" y="272"/><use href="#c110" x="104" y="272"/><use href="#c103" x="112" y="272"/><use href="#c115" x="128" y="272"/><use href="#c101" x="136" y="272"/><use href="#c108" x="144" y="272"/><use href="#c101" x="152" y="272"/><use href="#c99" x="160" y="272"/><use href="#c116" x="168" y="272"/><use href="#c102" x="184" y="272"/><use href="#c111" x="192" y="272"/><use href="#c114" x="200" y="272"/><use href="#c49" x="216" y="272"/><use href="#c48" x="224" y="272"/><use href="#c46" x="232" y="272"/><use href="#c48" x="240" y="272"/><use href="#c46" x="248" y="272"/><use href="#c50" x="256" y="272"/><use href="#c46" x="264" y="272"/><use href="#c49" x="272" y="272"/><use href="#c53" x="280" y="272"/><use href="#c117" x="0" y="288"/><use href="#c100" x="8" y="288"/><use href="#c104" x="16" y="288"/><use href="#c99" x="24" y="288"/><use href="#c112" x="32" y="288"/><use href="#c99" x="40" y="288"/><use href="#c58" x="48" y="288"/><use href="#c108" x="64" y="288"/><use href="#c101" x="72" y="288"/><use href="#c97" x="80" y="288"/><use href="#c115" x="88" y="288"/><use href="#c101" x="96" y="288"/><use href="#c111" x="112" y="288"/><use href="#c102" x="120" y="288"/><use href="#c49" x="136" y="288"/><use href="#c48" x="144" y="288"/><use href="#c46" x="152" y="288"/><use href="#c48" x="160" y="288"/><use href="#c46" x="168" y="288"/><use href="#c50" x="176" y="288"/><use href="#c46" x="184" y="288"/><use href="#c49" x="192" y="288"/><use href="#c53" x="200" y="288"/><use href="#c111" x="216" y="288"/><use href="#c98" x="224" y="288"/><use href="#c116" x="232" y="288"/><use href="#c97" x="240" y="288"/><use href="#c105" x="248" y="288"/><use href="#c110" x="256" y="288"/><use href="#c101" x="264" y="288"/><use href="#c100" x="272" y="288"/><use href="#c44" x="280" y="288"/><use href="#c108" x="296" y="288"/><use href="#c101" x="304" y="288"/><use href="#c97" x="312" y="288"/><use href="#c115" x="320" y="288"/><use href="#c101" x="328" y="288"/><use href="#c116" x="344" y="288"/><use href="#c105" x="352" y="288"/><use href="#c109" x="360" y="288"/><use href="#c101" x="368" y="288"/><use href="#c56" x="384" y="288"/><use href="#c54" x="392" y="288"/><use href="#c52" x="400" y="288"/><use href="#c48" x="408" y="288"/><use href="#c48" x="416" y="288"/><use href="#c100" x="0" y="304"/><use href="#c101" x="8" y="304"/><use href="#c108" x="16" y="304"/><use href="#c101" x="24" y="304"/><use href="#c116" x="32" y="304"/><use href="#c105" x="40" y="304"/><use href="#c110" x="48" y="304"/><use href="#c103" x="56" y="304"/><use href="#c114" x="72" y="304"/><use href="#c111" x="80" y="304"/><use href="#c117" x="88" y="304"/><use href="#c116" x="96" y="304"/><use href="#c101" x="104" y="304"/><use href="#c114" x="112" y="304"/><use href="#c115" x="120" y="304"/><use href="#c97" x="0" y="320"/><use href="#c100" x="8" y="320"/><use href="#c100" x="16" y="320"/><use href="#c105" x="24" y="320"/><use href="#c110" x="32" y="320"/><use href="#c103" x="40" y="320"/><use href="#c100" x="56" y="320"/><use href="#c110" x="64" y="320"/><use href="#c115" x="72" y="320"/><use href="#c49" x="88" y="320"/><use href="#c48" x="96" y="320"/><use href="#c46" x="104" y="320"/><use href="#c48" x="112" y="320"/><use href="#c46" x="120" y="320"/><use href="#c50" x="128" y="320"/><use href="#c46" x="136" y="320"/><use href="#c51" x="144" y="320"/><use href="#c79" x="0" y="336"/><use href="#c75" x="8" y="336"/><use href="#c98" x="0" y="368"/><use href="#c117" x="8" y="368"/><use href="#c105" x="16" y="368"/><use href="#c108" x="24" y="368"/><use href="#c100" x="32" y="368"/><use href="#c114" x="40" y="368"/><use href="#c111" x="48" y="368"/><use href="#c111" x="56" y="368"/><use href="#c116" x="64" y="368"/><use href="#c108" x="80" y="368"/><use href="#c111" x="88" y="368"/><use href="#c103" x="96" y="368"/><use href="#c105" x="104" y="368"/><use href="#c110" x="112" y="368"/><use href="#c58" x="120" y="368"/><use href="#c114" x="136" y="368"/><use href="#c111" x="144" y="368"/><use href="#c111" x="152" y="368"/><use href="#c116" x="160" y="368"/><use href="#c35" x="0" y="384"/><use href="#c108" x="16" y="384"/><use href="#c115" x="24" y="384"/><use href="#c47" x="40" y="384"/><use href="#c35" x="0" y="656"/><use href="#c105" x="16" y="656"/><use href="#c110" x="24" y="656"/><use href="#c115" x="32" y="656"/><use href="#c109" x="40" y="656"/><use href="#c111" x="48" y="656"/><use href="#c100" x="56" y="656"/><use href="#c47" x="72" y="656"/><use href="#c104" x="80" y="656"/><use href="#c101" x="88" y="656"/><use href="#c108" x="96" y="656"/><use href="#c108" x="104" y="656"/><use href="#c114" x="112" y="656"/><use href="#c97" x="120" y="656"/><use href="#c110" x="128" y="656"/><use href="#c100" x="136" y="656"/><use href="#c111" x="144" y="656"/><use href="#c109" x="152" y="656"/><use href="#c58" x="160" y="656"/><use href="#c99" x="176" y="656"/><use href="#c114" x="184" y="656"/><use href="#c110" x="192" y="656"/><use href="#c103" x="200" y="656"/><use href="#c105" x="216" y="656"/><use href="#c110" x="224" y="656"/><use href="#c105" x="232" y="656"/><use href="#c116" x="240" y="656"/><use href="#c100" x="256" y="656"/><use href="#c111" x="264" y="656"/><use href="#c110" x="272" y="656"/><use href="#c101" x="280" y="656"/><use href="#c35" x="0" y="672"/><use href="#c105" x="16" y="672"/><use href="#c110" x="24" y="672"/><use href="#c115" x="32" y="672"/><use href="#c109" x="40" y="672"/><use href="#c111" x="48" y="672"/><use href="#c100" x="56" y="672"/><use href="#c47" x="72" y="672"/><use href="#c104" x="80" y="672"/><use href="#c101" x="88" y="672"/><use href="#c108" x="96" y="672"/><use href="#c108" x="104" y="672"/><use href="#c111" x="112" y="672"/><use href="#c46" x="120" y="672"/><use href="#c107" x="128" y="672"/><use href="#c111" x="136" y="672"/><use href="#c104" x="0" y="688"/><use href="#c101" x="8" y="688"/><use href="#c108" x="16" y="688"/><use href="#c108" x="24" y="688"/><use href="#c111" x="32" y="688"/><use href="#c58" x="40" y="688"/><use href="#c108" x="56" y="688"/><use href="#c111" x="64" y="688"/><use href="#c97" x="72" y="688"/><use href="#c100" x="80" y="688"/><use href="#c105" x="88" y="688"/><use href="#c110" x="96" y="688"/><use href="#c103" x="104" y="688"/><use href="#c111" x="120" y="688"/><use href="#c117" x="128" y="688"/><use href="#c116" x="136" y="688"/><use href="#c45" x="144" y="688"/><use href="#c111" x="152" y="688"/><use href="#c102" x="160" y="688"/><use href="#c45" x="168" y="688"/><use href="#c116" x="176" y="688"/><use href="#c114" x="184" y="688"/><use href="#c101" x="192" y="688"/><use href="#c101" x="200" y="688"/><use href="#c109" x="216" y="688"/><use href="#c111" x="224" y="688"/><use href="#c100" x="232" y="688"/><use href="#c117" x="240" y="688"/><use href="#c108" x="248" y="688"/><use href="#c101" x="256" y="688"/><use href="#c116" x="272" y="688"/><use href="#c97" x="280" y="688"/><use href="#c105" x="288" y="688"/><use href="#c110" x="296" y="688"/><use href="#c116" x="304" y="688"/><use href="#c115" x="312" y="688"/><use href="#c107" x="328" y="688"/><use href="#c101" x="336" y="688"/><use href="#c114" x="344" y="688"/><use href="#c110" x="352" y="688"/><use href="#c101" x="360" y="688"/><use href="#c108" x="368" y="688"/><use href="#c46" x="376" y="688"/><use href="#c104" x="0" y="704"/><use href="#c101" x="8" y="704"/><use href="#c108" x="16" y="704"/><use href="#c108" x="24" y="704"/><use href="#c111" x="32" y="704"/><use href="#c105" x="48" y="704"/><use href="#c110" x="56" y="704"/><use href="#c105" x="64" y="704"/><use href="#c116" x="72" y="704"/><use href="#c35" x="0" y="720"/><use href="#c114" x="16" y="720"/><use href="#c109" x="24" y="720"/><use href="#c109" x="32" y="720"/><use href="#c111" x="40" y="720"/><use href="#c100" x="48" y="720"/><use href="#c104" x="64" y="720"/><use href="#c101" x="72" y="720"/><use href="#c108" x="80" y="720"/><use href="#c108" x="88" y="720"/><use href="#c111" x="96" y="720"/><use href="#c104" x="0" y="736"/><use href="#c101" x="8" y="736"/><use href="#c108" x="16" y="736"/><use href="#c108" x="24" y="736"/><use href="#c111" x="32" y="736"/><use href="#c101" x="48" y="736"/><use href="#c120" x="56" y="736"/><use href="#c105" x="64" y="736"/><use href="#c116" x="72" y="736"/><use href="#c35" x="0" y="752"/></g><g fill="#55ff55"><use href="#c97" x="0" y="400"/><use href="#c110" x="8" y="400"/><use href="#c111" x="16" y="400"/><use href="#c110" x="24" y="400"/><use href="#c121" x="32" y="400"/><use href="#c109" x="40" y="400"/><use href="#c111" x="48" y="400"/><use href="#c117" x="56" y="400"/><use href="#c115" x="64" y="400"/><use href="#c95" x="72" y="400"/><use href="#c105" x="80" y="400"/><use href="#c110" x="88" y="400"/><use href="#c111" x="96" y="400"/><use href="#c100" x="104" y="400"/><use href="#c101" x="112" y="400"/><use href="#c46" x="120" y="400"/><use href="#c107" x="128" y="400"/><use href="#c111" x="136" y="400"/><use href="#c97" x="0" y="416"/><use href="#c110" x="8" y="416"/><use href="#c111" x="16" y="416"/><use href="#c110" x="24" y="416"/><use href="#c121" x="32" y="416"/><use href="#c109" x="40" y="416"/><use href="#c111" x="48" y="416"/><use href="#c117" x="56" y="416"/><use href="#c115" x="64" y="416"/><use href="#c95" x="72" y="416"/><use href="#c105" x="80" y="416"/><use href="#c110" x="88" y="416"/><use href="#c111" x="96" y="416"/><use href="#c100" x="104" y="416"/><use href="#c101" x="112" y="416"/><use href="#c46" x="120" y="416"/><use href="#c111" x="128" y="416"/><use href="#c117" x="136" y="416"/><use href="#c116" x="144" y="416"/><use href="#c97" x="0" y="432"/><use href="#c110" x="8" y="432"/><use href="#c111" x="16" y="432"/><use href="#c110" x="24" y="432"/><use href="#c121" x="32" y="432"/><use href="#c109" x="40" y="432"/><use href="#c111" x="48" y="432"/><use href="#c117" x="56" y="432"/><use href="#c115" x="64" y="432"/><use href="#c95" x="72" y="432"/><use href="#c105" x="80" y="432"/><use href="#c110" x="88" y="432"/><use href="#c111" x="96" y="432"/><use href="#c100" x="104" y="432"/><use href="#c101" x="112" y="432"/><use href="#c46" x="120" y="432"/><use href="#c115" x="128" y="432"/><use href="#c104" x="136" y="432"/><use href="#c99" x="0" y="464"/><use href="#c111" x="8" y="464"/><use href="#c117" x="16" y="464"/><use href="#c110" x="24" y="464"/><use href="#c116" x="32" y="464"/><use href="#c46" x="40" y="464"/><use href="#c115" x="48" y="464"/><use href="#c104" x="56" y="464"/><use href="#c100" x="0" y="480"/><use href="#c101" x="8" y="480"/><use href="#c98" x="16" y="480"/><use href="#c117" x="24" y="480"/><use href="#c103" x="32" y="480"/><use href="#c102" x="40" y="480"/><use href="#c115" x="48" y="480"/><use href="#c46" x="56" y="480"/><use href="#c107" x="64" y="480"/><use href="#c111" x="72" y="480"/><use href="#c100" x="0" y="496"/><use href="#c101" x="8" y="496"/><use href="#c98" x="16" y="496"/><use href="#c117" x="24" y="496"/><use href="#c103" x="32" y="496"/><use href="#c102" x="40" y="496"/><use href="#c115" x="48" y="496"/><use href="#c46" x="56" y="496"/><use href="#c115" x="64" y="496"/><use href="#c104" x="72" y="496"/><use href="#c100" x="0" y="512"/><use href="#c101" x="8" y="512"/><use href="#c108" x="16" y="512"/><use href="#c97" x="24" y="512"/><use href="#c121" x="32" y="512"/><use href="#c46" x="40" y="512"/><use href="#c107" x="48" y="512"/><use href="#c111" x="56" y="512"/><use href="#c100" x="0" y="528"/><use href="#c101" x="8" y="528"/><use href="#c112" x="16" y="528"/><use href="#c46" x="24" y="528"/><use href="#c107" x="32" y="528"/><use href="#c111" x="40" y="528"/><use href="#c100" x="0" y="544"/><use href="#c101" x="8" y="544"/><use href="#c112" x="16" y="544"/><use href="#c50" x="24" y="544"/><use href="#c46" x="32" y="544"/><use href="#c107" x="40" y="544"/><use href="#c111" x="48" y="544"/><use href="#c102" x="0" y="592"/><use href="#c111" x="8" y="592"/><use href="#c112" x="16" y="592"/><use href="#c115" x="24" y="592"/><use href="#c46" x="32" y="592"/><use href="#c107" x="40" y="592"/><use href="#c111" x="48" y="592"/><use href="#c102" x="0" y="608"/><use href="#c111" x="8" y="608"/><use href="#c112" x="16" y="608"/><use href="#c115" x="24" y="608"/><use href="#c46" x="32" y="608"/><use href="#c115" x="40" y="608"/><use href="#c104" x="48" y="608"/><use href="#c104" x="0" y="624"/><use href="#c101" x="8" y="624"/><use href="#c108" x="16" y="624"/><use href="#c108" x="24" y="624"/><use href="#c111" x="32" y="624"/><use href="#c46" x="40" y="624"/><use href="#c107" x="48" y="624"/><use href="#c111" x="56" y="624"/><use href="#c104" x="0" y="640"/><use href="#c101" x="8" y="640"/><use href="#c108" x="16" y="640"/><use href="#c108" x="24" y="640"/><use href="#c111" x="32" y="640"/><use href="#c50" x="40" y="640"/><use href="#c46" x="48" y="640"/><use href="#c107" x="56" y="640"/><use href="#c111" x="64" y="640"/><use href="#c105" x="232" y="400"/><use href="#c110" x="240" y="400"/><use href="#c105" x="248" y="400"/><use href="#c116" x="256" y="400"/><use href="#c95" x="264" y="400"/><use href="#c104" x="272" y="400"/><use href="#c101" x="280" y="400"/><use href="#c108" x="288" y="400"/><use href="#c108" x="296" y="400"/><use href="#c111" x="304" y="400"/><use href="#c46" x="312" y="400"/><use href="#c111" x="320" y="400"/><use href="#c117" x="328" y="400"/><use href="#c116" x="336" y="400"/><use href="#c105" x="232" y="416"/><use href="#c110" x="240" y="416"/><use href="#c115" x="248" y="416"/><use href="#c95" x="256" y="416"/><use href="#c114" x="264" y="416"/><use href="#c109" x="272" y="416"/><use href="#c95" x="280" y="416"/><use href="#c109" x="288" y="416"/><use href="#c111" x="296" y="416"/><use href="#c100" x="304" y="416"/><use href="#c105" x="232" y="432"/><use href="#c110" x="240" y="432"/><use href="#c115" x="248" y="432"/><use href="#c95" x="256" y="432"/><use href="#c114" x="264" y="432"/><use href="#c109" x="272" y="432"/><use href="#c95" x="280" y="432"/><use href="#c109" x="288" y="432"/><use href="#c111" x="296" y="432"/><use href="#c100" x="304" y="432"/><use href="#c46" x="312" y="432"/><use href="#c111" x="320" y="432"/><use href="#c117" x="328" y="432"/><use href="#c116" x="336" y="432"/><use href="#c105" x="232" y="448"/><use href="#c110" x="240" y="448"/><use href="#c115" x="248" y="448"/><use href="#c114" x="256" y="448"/><use href="#c109" x="264" y="448"/><use href="#c46" x="272" y="448"/><use href="#c115" x="280" y="448"/><use href="#c104" x="288" y="448"/><use href="#c105" x="232" y="464"/><use href="#c111" x="240" y="464"/><use href="#c99" x="248" y="464"/><use href="#c116" x="256" y="464"/><use href="#c108" x="264" y="464"/><use href="#c46" x="272" y="464"/><use href="#c107" x="280" y="464"/><use href="#c111" x="288" y="464"/><use href="#c105" x="232" y="480"/><use href="#c111" x="240" y="480"/><use href="#c99" x="248" y="480"/><use href="#c116" x="256" y="480"/><use href="#c108" x="264" y="480"/><use href="#c46" x="272" y="480"/><use href="#c111" x="280" y="480"/><use href="#c117" x="288" y="480"/><use href="#c116" x="296" y="480"/><use href="#c105" x="232" y="496"/><use href="#c111" x="240" y="496"/><use href="#c99" x="248" y="496"/><use href="#c116" x="256" y="496"/><use href="#c108" x="264" y="496"/><use href="#c46" x="272" y="496"/><use href="#c115" x="280" y="496"/><use href="#c104" x="288" y="496"/><use href="#c105" x="232" y="512"/><use href="#c114" x="240" y="512"/><use href="#c113" x="248" y="512"/><use href="#c46" x="256" y="512"/><use href="#c107" x="264" y="512"/><use href="#c111" x="272" y="512"/><use href="#c107" x="232" y="528"/><use href="#c103" x="240" y="528"/><use href="#c100" x="248" y="528"/><use href="#c98" x="256" y="528"/><use href="#c45" x="264" y="528"/><use href="#c109" x="272" y="528"/><use href="#c111" x="280" y="528"/><use href="#c100" x="288" y="528"/><use href="#c46" x="296" y="528"/><use href="#c115" x="304" y="528"/><use href="#c104" x="312" y="528"/><use href="#c107" x="232" y="544"/><use href="#c103" x="240" y="544"/><use href="#c100" x="248" y="544"/><use href="#c98" x="256" y="544"/><use href="#c46" x="264" y="544"/><use href="#c115" x="272" y="544"/><use href="#c104" x="280" y="544"/><use href="#c107" x="232" y="560"/><use href="#c116" x="240" y="560"/><use href="#c104" x="248" y="560"/><use href="#c114" x="256" y="560"/><use href="#c101" x="264" y="560"/><use href="#c97" x="272" y="560"/><use href="#c100" x="280" y="560"/><use href="#c46" x="288" y="560"/><use href="#c107" x="296" y="560"/><use href="#c111" x="304" y="560"/><use href="#c107" x="232" y="576"/><use href="#c116" x="240" y="576"/><use href="#c104" x="248" y="576"/><use href="#c114" x="256" y="576"/><use href="#c101" x="264" y="576"/><use href="#c97" x="272" y="576"/><use href="#c100" x="280" y="576"/><use href="#c95" x="288" y="576"/><use href="#c117" x="296" y="576"/><use href="#c110" x="304" y="576"/><use href="#c105" x="312" y="576"/><use href="#c110" x="320" y="576"/><use href="#c116" x="328" y="576"/><use href="#c101" x="336" y="576"/><use href="#c114" x="344" y="576"/><use href="#c114" x="352" y="576"/><use href="#c117" x="360" y="576"/><use href="#c112" x="368" y="576"/><use href="#c116" x="376" y="576"/><use href="#c105" x="384" y="576"/><use href="#c98" x="392" y="576"/><use href="#c108" x="400" y="576"/><use href="#c101" x="408" y="576"/><use href="#c46" x="416" y="576"/><use href="#c107" x="424" y="576"/><use href="#c111" x="432" y="576"/><use href="#c107" x="232" y="592"/><use href="#c116" x="240" y="592"/><use href="#c104" x="248" y="592"/><use href="#c114" x="256" y="592"/><use href="#c101" x="264" y="592"/><use href="#c97" x="272" y="592"/><use href="#c100" x="280" y="592"/><use href="#c115" x="288" y="592"/><use href="#c46" x="296" y="592"/><use href="#c107" x="304" y="592"/><use href="#c111" x="312" y="592"/><use href="#c107" x="232" y="608"/><use href="#c116" x="240" y="608"/><use href="#c104" x="248" y="608"/><use href="#c114" x="256" y="608"/><use href="#c101" x="264" y="608"/><use href="#c97" x="272" y="608"/><use href="#c100" x="280" y="608"/><use href="#c115" x="288" y="608"/><use href="#c95" x="296" y="608"/><use href="#c117" x="304" y="608"/><use href="#c110" x="312" y="608"/><use href="#c105" x="320" y="608"/><use href="#c110" x="328" y="608"/><use href="#c116" x="336" y="608"/><use href="#c101" x="344" y="608"/><use href="#c114" x="352" y="608"/><use href="#c114" x="360" y="608"/><use href="#c117" x="368" y="608"/><use href="#c112" x="376" y="608"/><use href="#c116" x="384" y="608"/><use href="#c105" x="392" y="608"/><use href="#c98" x="400" y="608"/><use href="#c108" x="408" y="608"/><use href="#c101" x="416" y="608"/><use href="#c46" x="424" y="608"/><use href="#c107" x="432" y="608"/><use href="#c111" x="440" y="608"/><use href="#c109" x="464" y="464"/><use href="#c111" x="472" y="464"/><use href="#c100" x="480" y="464"/><use href="#c117" x="488" y="464"/><use href="#c108" x="496" y="464"/><use href="#c101" x="504" y="464"/><use href="#c95" x="512" y="464"/><use href="#c105" x="520" y="464"/><use href="#c110" x="528" y="464"/><use href="#c105" x="536" y="464"/><use href="#c116" x="544" y="464"/><use href="#c46" x="552" y="464"/><use href="#c107" x="560" y="464"/><use href="#c111" x="568" y="464"/><use href="#c109" x="464" y="480"/><use href="#c121" x="472" y="480"/><use href="#c105" x="480" y="480"/><use href="#c110" x="488" y="480"/><use href="#c115" x="496" y="480"/><use href="#c109" x="504" y="480"/><use href="#c111" x="512" y="480"/><use href="#c100" x="520" y="480"/><use href="#c46" x="528" y="480"/><use href="#c111" x="536" y="480"/><use href="#c117" x="544" y="480"/><use href="#c116" x="552" y="480"/><use href="#c109" x="464" y="496"/><use href="#c121" x="472" y="496"/><use href="#c114" x="480" y="496"/><use href="#c109" x="488" y="496"/><use href="#c109" x="496" y="496"/><use href="#c111" x="504" y="496"/><use href="#c100" x="512" y="496"/><use href="#c46" x="520" y="496"/><use href="#c111" x="528" y="496"/><use href="#c117" x="536" y="496"/><use href="#c116" x="544" y="496"/><use href="#c112" x="464" y="528"/><use href="#c97" x="472" y="528"/><use href="#c110" x="480" y="528"/><use href="#c105" x="488" y="528"/><use href="#c99" x="496" y="528"/><use href="#c46" x="504" y="528"/><use href="#c107" x="512" y="528"/><use href="#c111" x="520" y="528"/><use href="#c112" x="464" y="544"/><use href="#c97" x="472" y="544"/><use href="#c114" x="480" y="544"/><use href="#c97" x="488" y="544"/><use href="#c109" x="496" y="544"/><use href="#c115" x="504" y="544"/><use href="#c46" x="512" y="544"/><use href="#c107" x="520" y="544"/><use href="#c111" x="528" y="544"/><use href="#c112" x="464" y="560"/><use href="#c111" x="472" y="560"/><use href="#c108" x="480" y="560"/><use href="#c108" x="488" y="560"/><use href="#c46" x="496" y="560"/><use href="#c107" x="504" y="560"/><use href="#c111" x="512" y="560"/><use href="#c112" x="464" y="576"/><use href="#c111" x="472" y="576"/><use href="#c108" x="480" y="576"/><use href="#c108" x="488" y="576"/><use href="#c46" x="496" y="576"/><use href="#c111" x="504" y="576"/><use href="#c117" x="512" y="576"/><use href="#c116" x="520" y="576"/><use href="#c112" x="464" y="592"/><use href="#c111" x="472" y="592"/><use href="#c108" x="480" y="592"/><use href="#c108" x="488" y="592"/><use href="#c46" x="496" y="592"/><use href="#c115" x="504" y="592"/><use href="#c104" x="512" y="592"/><use href="#c115" x="696" y="416"/><use href="#c99" x="704" y="416"/><use href="#c104" x="712" y="416"/><use href="#c101" x="720" y="416"/><use href="#c100" x="728" y="416"/><use href="#c117" x="736" y="416"/><use href="#c108" x="744" y="416"/><use href="#c101" x="752" y="416"/><use href="#c46" x="760" y="416"/><use href="#c107" x="768" y="416"/><use href="#c111" x="776" y="416"/><use href="#c115" x="696" y="432"/><use href="#c108" x="704" y="432"/><use href="#c101" x="712" y="432"/><use href="#c101" x="720" y="432"/><use href="#c112" x="728" y="432"/><use href="#c46" x="736" y="432"/><use href="#c107" x="744" y="432"/><use href="#c111" x="752" y="432"/><use href="#c116" x="696" y="464"/><use href="#c105" x="704" y="464"/><use href="#c109" x="712" y="464"/><use href="#c101" x="720" y="464"/><use href="#c114" x="728" y="464"/><use href="#c46" x="736" y="464"/><use href="#c107" x="744" y="464"/><use href="#c111" x="752" y="464"/><use href="#c119" x="696" y="528"/><use href="#c97" x="704" y="528"/><use href="#c105" x="712" y="528"/><use href="#c116" x="720" y="528"/><use href="#c95" x="728" y="528"/><use href="#c113" x="736" y="528"/><use href="#c117" x="744" y="528"/><use href="#c101" x="752" y="528"/><use href="#c117" x="760" y="528"/><use href="#c101" x="768" y="528"/><use href="#c46" x="776" y="528"/><use href="#c107" x="784" y="528"/><use href="#c111" x="792" y="528"/><use href="#c119" x="696" y="544"/><use href="#c97" x="704" y="544"/><use href="#c105" x="712" y="544"/><use href="#c116" x="720" y="544"/><use href="#c95" x="728" y="544"/><use href="#c113" x="736" y="544"/><use href="#c117" x="744" y="544"/><use href="#c101" x="752" y="544"/><use href="#c117" x="760" y="544"/><use href="#c101" x="768" y="544"/><use href="#c50" x="776" y="544"/><use href="#c46" x="784" y="544"/><use href="#c107" x="792" y="544"/><use href="#c111" x="800" y="544"/><use href="#c119" x="696" y="560"/><use href="#c111" x="704" y="560"/><use href="#c114" x="712" y="560"/><use href="#c107" x="720" y="560"/><use href="#c95" x="728" y="560"/><use href="#c102" x="736" y="560"/><use href="#c114" x="744" y="560"/><use href="#c111" x="752" y="560"/><use href="#c109" x="760" y="560"/><use href="#c95" x="768" y="560"/><use href="#c119" x="776" y="560"/><use href="#c111" x="784" y="560"/><use href="#c114" x="792" y="560"/><use href="#c107" x="800" y="560"/><use href="#c46" x="808" y="560"/><use href="#c107" x="816" y="560"/><use href="#c111" x="824" y="560"/><use href="#c119" x="696" y="576"/><use href="#c111" x="704" y="576"/><use href="#c114" x="712" y="576"/><use href="#c107" x="720" y="576"/><use href="#c113" x="728" y="576"/><use href="#c117" x="736" y="576"/><use href="#c101" x="744" y="576"/><use href="#c117" x="752" y="576"/><use href="#c101" x="760" y="576"/><use href="#c46" x="768" y="576"/><use href="#c107" x="776" y="576"/><use href="#c111" x="784" y="576"/><use href="#c119" x="696" y="592"/><use href="#c111" x="704" y="592"/><use href="#c114" x="712" y="592"/><use href="#c107" x="720" y="592"/><use href="#c113" x="728" y="592"/><use href="#c117" x="736" y="592"/><use href="#c101" x="744" y="592"/><use href="#c117" x="752" y="592"/><use href="#c101" x="760" y="592"/><use href="#c95" x="768" y="592"/><use href="#c99" x="776" y="592"/><use href="#c104" x="784" y="592"/><use href="#c101" x="792" y="592"/><use href="#c97" x="800" y="592"/><use href="#c116" x="808" y="592"/><use href="#c46" x="816" y="592"/><use href="#c107" x="824" y="592"/><use href="#c111" x="832" y="592"/><use href="#c119" x="696" y="608"/><use href="#c111" x="704" y="608"/><use href="#c114" x="712" y="608"/><use href="#c107" x="720" y="608"/><use href="#c113" x="728" y="608"/><use href="#c117" x="736" y="608"/><use href="#c101" x="744" y="608"/><use href="#c117" x="752" y="608"/><use href="#c101" x="760" y="608"/><use href="#c95" x="768" y="608"/><use href="#c99" x="776" y="608"/><use href="#c104" x="784" y="608"/><use href="#c101" x="792" y="608"/><use href="#c97" x="800" y="608"/><use href="#c116" x="808" y="608"/><use href="#c46" x="816" y="608"/><use href="#c115" x="824" y="608"/><use href="#c104" x="832" y="608"/></g><g fill="#5555ff"><use href="#c98" x="0" y="448"/><use href="#c105" x="8" y="448"/><use href="#c110" x="16" y="448"/><use href="#c100" x="0" y="560"/><use href="#c101" x="8" y="560"/><use href="#c118" x="16" y="560"/><use href="#c101" x="0" y="576"/><use href="#c116" x="8" y="576"/><use href="#c99" x="16" y="576"/><use href="#c108" x="232" y="624"/><use href="#c105" x="240" y="624"/><use href="#c98" x="248" y="624"/><use href="#c108" x="464" y="416"/><use href="#c111" x="472" y="416"/><use href="#c115" x="480" y="416"/><use href="#c116" x="488" y="416"/><use href="#c43" x="496" y="416"/><use href="#c102" x="504" y="416"/><use href="#c111" x="512" y="416"/><use href="#c117" x="520" y="416"/><use href="#c110" x="528" y="416"/><use href="#c100" x="536" y="416"/><use href="#c109" x="464" y="432"/><use href="#c101" x="472" y="432"/><use href="#c100" x="480" y="432"/><use href="#c105" x="488" y="432"/><use href="#c97" x="496" y="432"/><use href="#c109" x="464" y="448"/><use href="#c110" x="472" y="448"/><use href="#c116" x="480" y="448"/><use href="#c111" x="464" y="512"/><use href="#c112" x="472" y="512"/><use href="#c116" x="480" y="512"/><use href="#c112" x="464" y="608"/><use href="#c114" x="472" y="608"/><use href="#c111" x="480" y="608"/><use href="#c99" x="488" y="608"/><use href="#c114" x="464" y="624"/><use href="#c111" x="472" y="624"/><use href="#c111" x="480" y="624"/><use href="#c116" x="488" y="624"/><use href="#c114" x="464" y="640"/><use href="#c117" x="472" y="640"/><use href="#c110" x="480" y="640"/><use href="#c115" x="696" y="400"/><use href="#c98" x="704" y="400"/><use href="#c105" x="712" y="400"/><use href="#c110" x="720" y="400"/><use href="#c115" x="696" y="448"/><use href="#c121" x="704" y="448"/><use href="#c115" x="712" y="448"/><use href="#c116" x="696" y="480"/><use href="#c109" x="704" y="480"/><use href="#c112" x="712" y="480"/><use href="#c117" x="696" y="496"/><use href="#c115" x="704" y="496"/><use href="#c114" x="712" y="496"/><use href="#c118" x="696" y="512"/><use href="#c97" x="704" y="512"/><use href="#c114" x="712" y="512"/></g><g fill="#55ffff"><use href="#c108" x="232" y="640"/><use href="#c105" x="240" y="640"/><use href="#c98" x="248" y="640"/><use href="#c54" x="256" y="640"/><use href="#c52" x="264" y="640"/><use href="#c108" x="464" y="400"/><use href="#c105" x="472" y="400"/><use href="#c110" x="480" y="400"/><use href="#c117" x="488" y="400"/><use href="#c120" x="496" y="400"/><use href="#c114" x="504" y="400"/><use href="#c99" x="512" y="400"/></g><rect x="16" y="766" width="8" height="2" fill="#aaaaaa"/></svg>
<pre id="txt">random: fast init done
input: ImExPS/2 Generic Explorer Mouse as /devices/platform/i8042/serio1/input/input3
EXT4-fs (vda): couldn't mount as ext3 due to feature incompatibilities
EXT4-fs (vda): mounting ext2 file system using the ext4 subsystem
EXT4-fs (vda): mounted filesystem without journal. Opts: (null)
VFS: Mounted root (ext2 filesystem) readonly on device 254:0.
devtmpfs: mounted
Freeing unused kernel memory: 840K (ffffffff81871000 - ffffffff81943000)
Write protecting the kernel read-only data: 8192k
Freeing unused kernel memory: 1132K (ffff8800014e5000 - ffff880001600000)
Freeing unused kernel memory: 468K (ffff88000178b000 - ffff880001800000)
EXT4-fs (vda): warning: mounting unchecked fs, running e2fsck is recommended
EXT4-fs (vda): re-mounted. Opts: block_validity,barrier,user_xattr,errors=remount-ro
Starting logging: OK
Initializing random number generator... done.
Starting network: udhcpc: started, v1.26.2
udhcpc: sending discover
udhcpc: sending select for 10.0.2.15
udhcpc: lease of 10.0.2.15 obtained, lease time 86400
deleting routers
adding dns 10.0.2.3
OK

buildroot login: root
# ls /
anonymous_inode.ko           init_hello.out               linuxrc                      sbin
anonymous_inode.out          ins_rm_mod                   lost+found                   schedule.ko
anonymous_inode.sh           ins_rm_mod.out               media                        sleep.ko
bin                          insrm.sh                     mnt                          sys
count.sh                     ioctl.ko                     module_init.ko               timer.ko
debugfs.ko                   ioctl.out                    myinsmod.out                 tmp
debugfs.sh                   ioctl.sh                     myrmmod.out                  usr
delay.ko                     irq.ko                       opt                          var
dep.ko                       kgdb-mod.sh                  panic.ko                     wait_queue.ko
dep2.ko                      kgdb.sh                      params.ko                    wait_queue2.ko
dev                          kthread.ko                   poll.ko                      work_from_work.ko
etc                          kthread_uninterruptible.ko   poll.out                     workqueue.ko
fops.ko                      kthreads.ko                  poll.sh                      workqueue_cheat.ko
fops.sh                      kthreads_uninterruptible.ko  proc                         workqueue_cheat.sh
hello.ko                     lib                          root
hello2.ko                    lib64                        run
# insmod /hellrandom: crng init done
# insmod /hello.ko
hello: loading out-of-tree module taints kernel.
hello init
# rmmod hello
hello exit
#</pre>
</div></body></html>
